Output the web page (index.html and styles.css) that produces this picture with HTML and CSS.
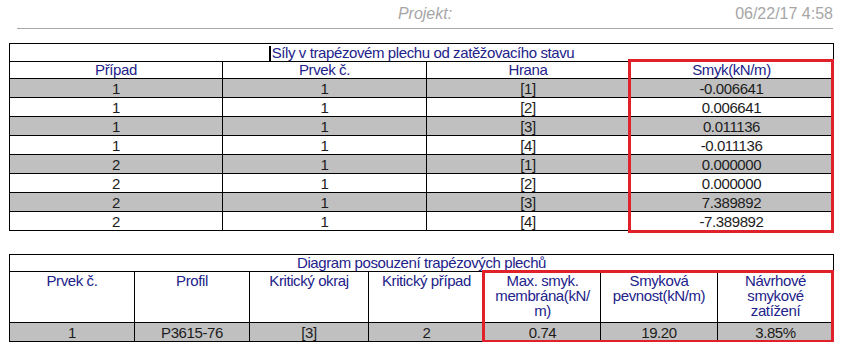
FILE: index.html
```html
<!DOCTYPE html>
<html lang="cs">
<head>
<meta charset="utf-8">
<title>Síly v trapézovém plechu</title>
<link rel="stylesheet" href="styles.css">
</head>
<body>
<div class="topbar">
  <span></span>
  <span class="project">Projekt:</span>
  <span class="date">06/22/17 4:58</span>
</div>

<div class="table-wrap t1">
  <div class="row title"><div class="cell span"><span class="cursor"></span>Síly v trapézovém plechu od zatěžovacího stavu</div></div>
  <div class="row head">
    <div class="cell">Případ</div><div class="cell">Prvek č.</div><div class="cell">Hrana</div><div class="cell">Smyk(kN/m)</div>
  </div>
  <div class="row body gray"><div class="cell">1</div><div class="cell">1</div><div class="cell">[1]</div><div class="cell">-0.006641</div></div>
  <div class="row body"><div class="cell">1</div><div class="cell">1</div><div class="cell">[2]</div><div class="cell">0.006641</div></div>
  <div class="row body gray"><div class="cell">1</div><div class="cell">1</div><div class="cell">[3]</div><div class="cell">0.011136</div></div>
  <div class="row body"><div class="cell">1</div><div class="cell">1</div><div class="cell">[4]</div><div class="cell">-0.011136</div></div>
  <div class="row body gray"><div class="cell">2</div><div class="cell">1</div><div class="cell">[1]</div><div class="cell">0.000000</div></div>
  <div class="row body"><div class="cell">2</div><div class="cell">1</div><div class="cell">[2]</div><div class="cell">0.000000</div></div>
  <div class="row body gray"><div class="cell">2</div><div class="cell">1</div><div class="cell">[3]</div><div class="cell">7.389892</div></div>
  <div class="row body"><div class="cell">2</div><div class="cell">1</div><div class="cell">[4]</div><div class="cell">-7.389892</div></div>
  <div class="mark mark1"></div>
</div>

<div class="table-wrap t2">
  <div class="row title"><div class="cell span">Diagram posouzení trapézových plechů</div></div>
  <div class="row head">
    <div class="cell">Prvek č.</div>
    <div class="cell">Profil</div>
    <div class="cell">Kritický okraj</div>
    <div class="cell">Kritický případ</div>
    <div class="cell">Max. smyk.<br>membrána(kN/<br>m)</div>
    <div class="cell">Smyková<br>pevnost(kN/m)</div>
    <div class="cell">Návrhové<br>smykové<br>zatížení</div>
  </div>
  <div class="row body gray">
    <div class="cell">1</div><div class="cell">P3615-76</div><div class="cell">[3]</div><div class="cell">2</div><div class="cell">0.74</div><div class="cell">19.20</div><div class="cell">3.85%</div>
  </div>
  <div class="mark mark2"></div>
</div>
</body>
</html>
```

FILE: styles.css
```css
* { box-sizing: border-box; }

body {
  margin: 0;
  background: #ffffff;
  font-family: "Liberation Sans", Arial, sans-serif;
  font-size: 15px;
  letter-spacing: -0.4px;
  color: #1c1c1c;
}

.topbar {
  margin: 0 9px 0 17px;
  height: 29px;
  border-bottom: 1px solid #a8a8a8;
  display: grid;
  grid-template-columns: 1fr auto 1fr;
  align-items: end;
  padding-bottom: 5px;
  color: #a6a6a6;
  font-size: 16px;
  line-height: 18px;
  letter-spacing: 0;
}

.project {
  font-style: italic;
  font-family: "Liberation Sans Narrow", "Liberation Sans", sans-serif;
}

.date {
  justify-self: end;
  font-family: "Liberation Sans Narrow", "Liberation Sans", sans-serif;
}

.table-wrap {
  position: relative;
  margin-left: 9px;
  width: 825px;
  border-top: 1px solid #000;
  border-left: 1px solid #000;
}

.t1 { margin-top: 14px; }
.t2 { margin-top: 23px; }

.row { display: grid; }

.t1 .row { grid-template-columns: 213px 204px 203px 204px; }
.t2 .row { grid-template-columns: 125px 115px 119px 116px 116px 117px 116px; }

.row.title { grid-template-columns: 1fr; }

.cell {
  border-right: 1px solid #000;
  border-bottom: 1px solid #000;
  text-align: center;
  white-space: nowrap;
}

.title .cell {
  color: #22228a;
}

.t1 .title .cell { height: 18px; line-height: 17px; }
.t2 .title .cell { height: 17px; line-height: 16px; }

.head .cell { color: #22228a; }
.t1 .head .cell { height: 17px; line-height: 16px; }
.t2 .head .cell { height: 51px; line-height: 15px; padding-top: 1px; }

.body .cell { height: 19px; line-height: 19px; }
.gray .cell { background: #c0c0c0; }

.cursor {
  display: inline-block;
  width: 2px;
  height: 15px;
  background: #000;
  vertical-align: -3px;
  margin-right: 1px;
}

.mark {
  position: absolute;
  border: 3px solid #e0202a;
  pointer-events: none;
}

.mark1 { left: 618px; top: 15px; width: 206px; height: 174px; }
.mark2 { left: 472px; top: 15px; width: 352px; height: 73px; }
```
